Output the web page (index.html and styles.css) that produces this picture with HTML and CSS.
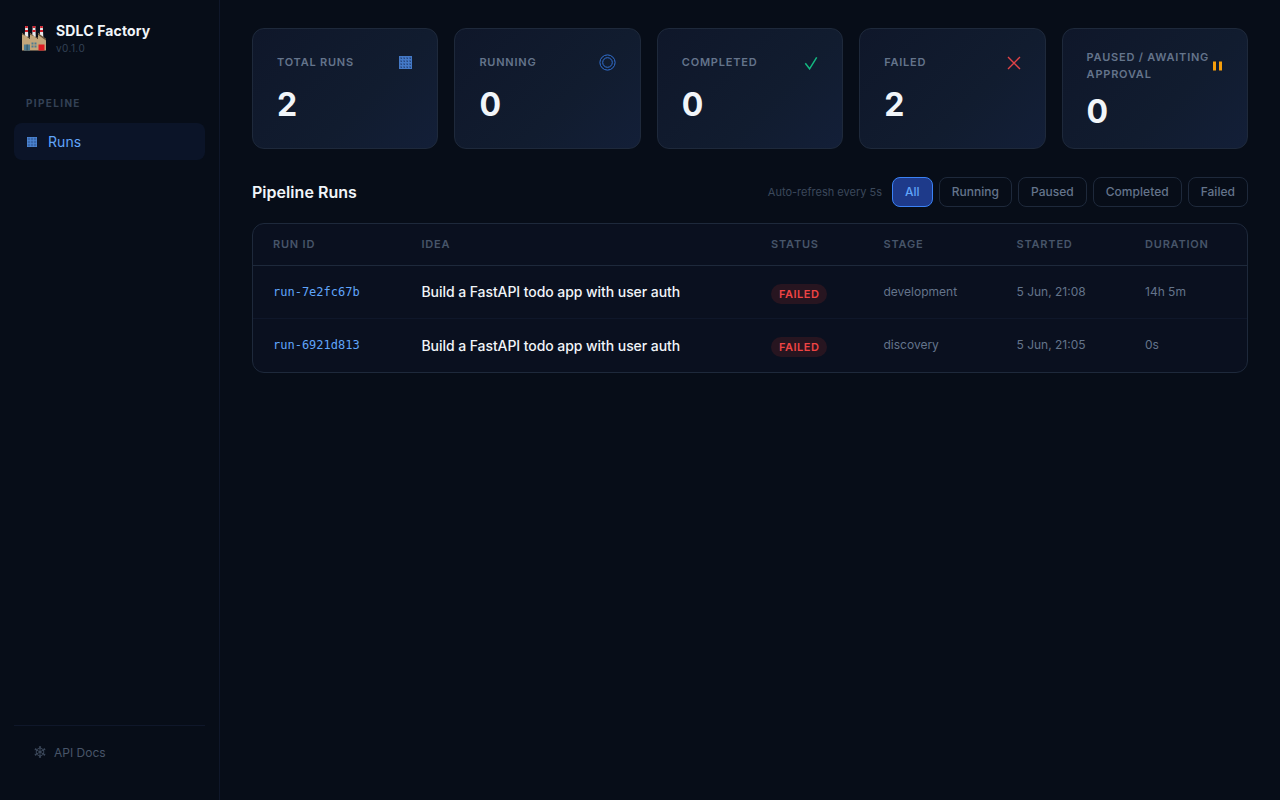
FILE: index.html
```html
<!DOCTYPE html>
<html lang="en">
<head>
    <meta charset="UTF-8">
    <title>SDLC Factory</title>
    <link rel="stylesheet" href="styles.css">
</head>
<body>
    <aside class="sidebar">
        <div class="logo">
            <svg class="logo-icon" width="24" height="25" viewBox="0 0 24 25">
                <path d="M3.2 0h2.6l.5 11H2.7zM10.7 0h2.6l.5 11h-3.6zM18.2 0h2.6l.5 11h-3.6z" fill="#e8e6e8"/>
                <path d="M3.2 0h2.6v2H3.2zM3 4h3v2H3zM10.7 0h2.6v2h-2.6zM10.5 4h3v2h-3zM18.2 0h2.6v2h-2.6zM18 4h3v2h-3z" fill="#d3202b"/>
                <path d="M0 7l8 6V7l8 6V7l8 6v11.5H0z" fill="#c3a67b"/>
                <path d="M0 7l8 6V7l8 6V7l8 6v1.5l-8-5.7v2.7L8 8.8v2.7L0 8.5z" fill="#655139"/>
                <path d="M2 18.5h6v6H2z" fill="#507c91"/>
                <path d="M4.7 18.5h.8v6h-.8z" fill="#294655"/>
                <path d="M9.5 16.5h2v2h-2zM12.5 16.5h2v2h-2zM9.5 19.5h2v2h-2zM12.5 19.5h2v2h-2z" fill="#507c91"/>
                <path d="M16.5 18.5h6v6h-6z" fill="#e01b22"/>
            </svg>
            <div>
                <div class="logo-text">SDLC Factory</div>
                <div class="logo-version">v0.1.0</div>
            </div>
        </div>
        <div class="nav-section">Pipeline</div>
        <a class="nav-item active">
            <svg class="nav-icon" width="12" height="12" viewBox="0 0 12 12">
                <path d="M1 1h10v10H1z" fill="#3968ad"/>
                <path d="M1 1.5h10M1 4.5h10M1 7.5h10M1 10.5h10M1.5 1v10M4.5 1v10M7.5 1v10M10.5 1v10" stroke="#4e87d4" stroke-width=".7"/>
            </svg>
            Runs
        </a>
        <div class="sidebar-footer">
            <a class="docs-link">
                <svg width="12" height="12" viewBox="0 0 12 12" fill="none" stroke="currentColor" stroke-width=".8">
                    <path d="M6 .5v11M1.2 3.2l9.6 5.6M10.8 3.2L1.2 8.8"/>
                    <path d="M6 1.8l3.7 2.1v4.2L6 10.2 2.3 8.1V3.9z"/>
                    <path d="M4.9.9h2.2M4.9 11.1h2.2M.9 4.1l1-1.9M10.1 9.8l1-1.9M.9 7.9l1 1.9M10.1 2.2l1 1.9"/>
                </svg>
                API Docs
            </a>
        </div>
    </aside>

    <main class="main">
        <div class="stats">
            <div class="stat-card">
                <div class="stat-header">
                    <span class="stat-label">Total Runs</span>
                    <svg class="stat-icon grid" width="13" height="13" viewBox="0 0 13 13">
                        <path d="M0 0h13v13H0z" fill="#3763a9"/>
                        <path d="M0 .5h13M0 3.5h13M0 6.5h13M0 9.5h13M0 12.5h13M.5 0v13M3.5 0v13M6.5 0v13M9.5 0v13M12.5 0v13" stroke="#4479c6"/>
                        <path d="M2 2h1v1H2zM5 2h1v1H5zM8 2h1v1H8zM11 2h1v1h-1zM2 5h1v1H2zM5 5h1v1H5zM8 5h1v1H8zM11 5h1v1h-1zM2 8h1v1H2zM5 8h1v1H5zM8 8h1v1H8zM11 8h1v1h-1zM2 11h1v1H2zM5 11h1v1H5zM8 11h1v1H8zM11 11h1v1h-1z" fill="#28497f"/>
                    </svg>
                </div>
                <div class="stat-value">2</div>
            </div>
            <div class="stat-card">
                <div class="stat-header">
                    <span class="stat-label">Running</span>
                    <svg class="stat-icon ring" width="17" height="17" viewBox="0 0 17 17" fill="none" stroke="#3270d2">
                        <circle cx="8.5" cy="8.5" r="7.6"/>
                        <circle cx="8.5" cy="8.5" r="4.8"/>
                    </svg>
                </div>
                <div class="stat-value">0</div>
            </div>
            <div class="stat-card">
                <div class="stat-header">
                    <span class="stat-label">Completed</span>
                    <svg class="stat-icon" width="14" height="14" viewBox="0 0 14 14" fill="none" stroke="#14b881" stroke-width="1.5">
                        <path d="M1.3 7.2L5.6 12.8 12.7 1.3"/>
                    </svg>
                </div>
                <div class="stat-value">0</div>
            </div>
            <div class="stat-card">
                <div class="stat-header">
                    <span class="stat-label">Failed</span>
                    <svg class="stat-icon" width="14" height="14" viewBox="0 0 14 14" fill="none" stroke="#e14347" stroke-width="1.4">
                        <path d="M1 1l12 12M13 1L1 13"/>
                    </svg>
                </div>
                <div class="stat-value">2</div>
            </div>
            <div class="stat-card">
                <div class="stat-header">
                    <span class="stat-label">Paused / Awaiting Approval</span>
                    <svg class="stat-icon" width="11" height="10" viewBox="0 0 11 10" fill="#f59e0b">
                        <path d="M1 .5h3v9H1zM7 .5h3v9H7z"/>
                    </svg>
                </div>
                <div class="stat-value">0</div>
            </div>
        </div>

        <div class="toolbar">
            <h2>Pipeline Runs</h2>
            <div class="filters">
                <span class="refresh-note">Auto-refresh every 5s</span>
                <button class="filter-btn active">All</button>
                <button class="filter-btn">Running</button>
                <button class="filter-btn">Paused</button>
                <button class="filter-btn">Completed</button>
                <button class="filter-btn">Failed</button>
            </div>
        </div>

        <div class="table-wrap">
            <table>
                <thead>
                    <tr>
                        <th class="col-id">Run ID</th>
                        <th class="col-idea">Idea</th>
                        <th class="col-status">Status</th>
                        <th class="col-stage">Stage</th>
                        <th class="col-started">Started</th>
                        <th>Duration</th>
                    </tr>
                </thead>
                <tbody>
                    <tr>
                        <td class="run-id">run-7e2fc67b</td>
                        <td class="idea">Build a FastAPI todo app with user auth</td>
                        <td class="status"><span class="badge">Failed</span></td>
                        <td class="muted">development</td>
                        <td class="muted">5 Jun, 21:08</td>
                        <td class="muted">14h 5m</td>
                    </tr>
                    <tr>
                        <td class="run-id">run-6921d813</td>
                        <td class="idea">Build a FastAPI todo app with user auth</td>
                        <td class="status"><span class="badge">Failed</span></td>
                        <td class="muted">discovery</td>
                        <td class="muted">5 Jun, 21:05</td>
                        <td class="muted">0s</td>
                    </tr>
                </tbody>
            </table>
        </div>
    </main>
</body>
</html>
```
FILE: styles.css
```css
* {
    box-sizing: border-box;
    margin: 0;
    padding: 0;
}

body {
    background: #070d18;
    color: #f1f5f9;
    font-family: Inter, sans-serif;
    font-size: 14px;
    display: flex;
    height: 100vh;
}

svg {
    display: block;
    flex-shrink: 0;
}

/* Sidebar */
.sidebar {
    width: 220px;
    flex-shrink: 0;
    padding: 22px 14px 37px;
    border-right: 1px solid #0f172a;
    display: flex;
    flex-direction: column;
}

.logo {
    display: flex;
    align-items: center;
    gap: 10px;
    padding: 0 8px;
    height: 34px;
}

.logo-icon {
    margin-top: -2px;
}

.logo-text {
    font-size: 14px;
    font-weight: 700;
    line-height: 18px;
    letter-spacing: 0.14px;
}

.logo-version {
    font-size: 10px;
    line-height: 16px;
    letter-spacing: 0.4px;
    color: #334155;
}

.nav-section {
    font-size: 10px;
    font-weight: 700;
    line-height: 12px;
    letter-spacing: 1.35px;
    text-transform: uppercase;
    color: #334155;
    padding: 0 12px;
    margin-top: 41px;
    margin-bottom: 14px;
}

.nav-item {
    display: flex;
    align-items: center;
    gap: 10px;
    height: 37px;
    padding: 0 12px;
    border-radius: 8px;
    letter-spacing: 0.1px;
    color: #60a5fa;
    background: #0b1428;
}

.sidebar-footer {
    margin-top: auto;
    border-top: 1px solid #0f172a;
    padding: 16px 20px 1px;
}

.docs-link {
    display: flex;
    align-items: center;
    gap: 8px;
    height: 20px;
    font-size: 12px;
    color: #475569;
}

/* Stat cards */
.main {
    flex: 1;
    padding: 28px 32px;
}

.stats {
    display: grid;
    grid-template-columns: repeat(5, 1fr);
    gap: 16px;
}

.stat-card {
    height: 121px;
    padding: 20px 24px;
    border: 1px solid #1e293b;
    border-radius: 12px;
    background: linear-gradient(135deg, #0f172a 0%, #111c2f 60%, #131f38 100%);
}

.stat-header {
    display: flex;
    justify-content: space-between;
    align-items: center;
    min-height: 27px;
}

.stat-label {
    font-size: 11px;
    font-weight: 600;
    line-height: 17px;
    letter-spacing: 0.78px;
    text-transform: uppercase;
    color: #64748b;
}

.stat-icon.grid {
    margin-right: 1px;
}

.stat-value {
    font-size: 32px;
    font-weight: 700;
    line-height: 38px;
    margin-top: 10px;
}

/* Toolbar */
.toolbar {
    display: flex;
    justify-content: space-between;
    align-items: center;
    margin: 28px 0 16px;
}

.toolbar h2 {
    font-size: 16px;
    font-weight: 600;
    letter-spacing: 0.04px;
}

.filters {
    display: flex;
    align-items: center;
    gap: 6px;
}

.refresh-note {
    font-size: 11px;
    color: #3b485b;
    margin-right: 4px;
}

.filter-btn {
    height: 30px;
    padding: 0 12px 2px;
    border: 1px solid #1e293b;
    border-radius: 8px;
    background: transparent;
    color: #64748b;
    font-family: inherit;
    font-size: 12px;
    font-weight: 500;
    letter-spacing: 0.03px;
    cursor: pointer;
}

.filter-btn.active {
    background: #1e3a8a;
    border-color: #3b82f6;
    color: #60a5fa;
}

/* Runs table */
.table-wrap {
    border: 1px solid #1e293b;
    border-radius: 12px;
    background: #0a101f;
    overflow: hidden;
}

table {
    width: 100%;
    table-layout: fixed;
    border-collapse: separate;
    border-spacing: 0;
}

th {
    height: 42px;
    padding: 0 20px 2px;
    border-bottom: 1px solid #1e293b;
    text-align: left;
    font-size: 11px;
    font-weight: 600;
    letter-spacing: 0.8px;
    text-transform: uppercase;
    color: #475569;
}

.col-id {
    width: 148.5px;
}

.col-idea {
    width: 349.5px;
}

.col-status {
    width: 112.5px;
}

.col-stage {
    width: 133px;
}

.col-started {
    width: 128.5px;
}

td {
    height: 53px;
    padding: 0 20px;
    white-space: nowrap;
}

tbody tr:first-child td {
    border-bottom: 1px solid #0f172a;
}

.run-id {
    padding-bottom: 1px;
    font-family: "DejaVu Sans Mono", monospace;
    font-size: 12px;
    color: #60a5fa;
}

.idea {
    font-weight: 450;
    letter-spacing: -0.07px;
}

tr:first-child .idea {
    padding-bottom: 1px;
}

.status {
    padding-top: 3px;
}

.badge {
    display: inline-block;
    padding: 0 8px;
    border-radius: 10px;
    background: #271520;
    color: #ef4444;
    font-size: 11px;
    font-weight: 600;
    line-height: 20px;
    letter-spacing: 0.5px;
    text-transform: uppercase;
    vertical-align: middle;
}

.muted {
    padding-bottom: 2px;
    font-size: 12px;
    color: #64748b;
}
```
